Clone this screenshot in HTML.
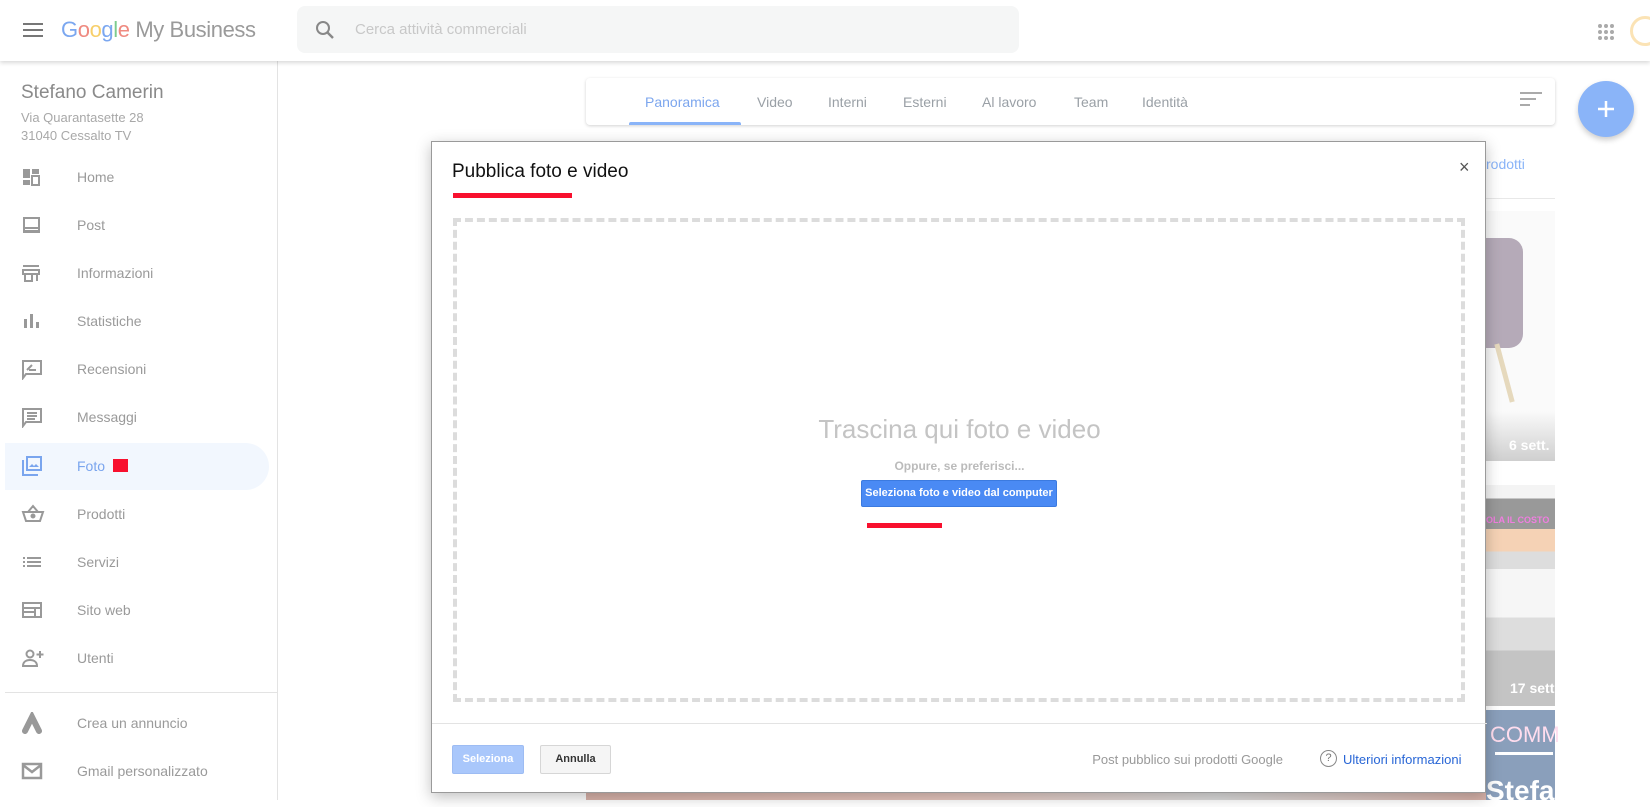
<!DOCTYPE html>
<html><head><meta charset="utf-8">
<style>
*{margin:0;padding:0;box-sizing:border-box}
body{width:1650px;height:800px;overflow:hidden;background:#fff;font-family:"Liberation Sans",Arial,sans-serif;position:relative}
.abs{position:absolute}
.top{left:0;top:0;width:1650px;height:61px;background:#fff;box-shadow:0 2px 4px rgba(0,0,0,.15);z-index:3}
.side{left:0;top:61px;width:278px;height:739px;border-right:1px solid #e3e3e3}
.nav{position:absolute;left:0;width:278px;height:46px;font-size:14px;color:#9a9a9a}
.nav span{position:absolute;left:77px;top:50%;transform:translateY(-50%)}
.nav svg{position:absolute;left:21px;top:50%;transform:translateY(-50%)}
.tab{position:absolute;top:94px;font-size:14px;color:#9aa0a6}
</style></head><body>

<div class="abs top">
  <svg class="abs" style="left:23px;top:22px" width="20" height="16"><rect y="1" width="20" height="2" fill="#777"/><rect y="7" width="20" height="2" fill="#777"/><rect y="13" width="20" height="2" fill="#777"/></svg>
  <div class="abs" style="left:61px;top:17px;font-size:22px;letter-spacing:-0.4px"><span style="color:#7ba7f0">G</span><span style="color:#ef8a80">o</span><span style="color:#f7cf6a">o</span><span style="color:#7ba7f0">g</span><span style="color:#7ccb8e">l</span><span style="color:#ef8a80">e</span> <span style="color:#9a9a9a">My Business</span></div>
  <div class="abs" style="left:297px;top:6px;width:722px;height:47px;background:#f5f6f6;border-radius:8px">
    <svg class="abs" style="left:18px;top:14px" width="20" height="20"><circle cx="8" cy="8" r="6" stroke="#888" stroke-width="2" fill="none"/><line x1="12.5" y1="12.5" x2="18" y2="18" stroke="#888" stroke-width="2.4"/></svg>
    <div class="abs" style="left:58px;top:15px;font-size:15px;color:#c8c8c8">Cerca attività commerciali</div>
  </div>
  <svg class="abs" style="left:1597px;top:23px" width="18" height="18" fill="#aaa"><circle cx="3" cy="3" r="2"/><circle cx="9" cy="3" r="2"/><circle cx="15" cy="3" r="2"/><circle cx="3" cy="9" r="2"/><circle cx="9" cy="9" r="2"/><circle cx="15" cy="9" r="2"/><circle cx="3" cy="15" r="2"/><circle cx="9" cy="15" r="2"/><circle cx="15" cy="15" r="2"/></svg>
  <div class="abs" style="left:1630px;top:16px;width:30px;height:30px;border-radius:50%;border:3px solid #fbe3b5"></div>
</div>

<div class="abs side">
  <div class="abs" style="left:21px;top:21px;font-size:19px;color:#8a8a8a">Stefano Camerin</div>
  <div class="abs" style="left:21px;top:48px;font-size:13px;color:#a8a8a8;line-height:18px">Via Quarantasette 28<br>31040 Cessalto TV</div>
</div>
<div class="abs" style="left:5px;top:443px;width:264px;height:47px;background:#f2f7fe;border-radius:0 24px 24px 0"></div>

<div class="nav" style="top:154px"><svg width="20" height="20" fill="#999"><rect x="2" y="2" width="7" height="9"/><rect x="11" y="2" width="7" height="5"/><rect x="2" y="13" width="7" height="5"/><rect x="11" y="9" width="7" height="9" fill="none" stroke="#999" stroke-width="2"/></svg><span>Home</span></div>
<div class="nav" style="top:202px"><svg width="20" height="20"><rect x="2" y="2" width="17" height="16" fill="#999"/><rect x="4" y="4" width="13" height="8" fill="#fff"/><rect x="4" y="14" width="13" height="1" fill="#fff"/></svg><span>Post</span></div>
<div class="nav" style="top:250px"><svg width="20" height="20" fill="none" stroke="#999" stroke-width="2"><line x1="2" y1="3" x2="18" y2="3"/><path d="M2 7h16v4H2zM4 11v7h7v-7M16 11v7"/></svg><span>Informazioni</span></div>
<div class="nav" style="top:298px"><svg width="20" height="20" fill="#999"><rect x="3" y="8" width="3" height="9"/><rect x="9" y="3" width="3" height="14"/><rect x="15" y="11" width="3" height="6"/></svg><span>Statistiche</span></div>
<div class="nav" style="top:346px"><svg width="22" height="22" fill="none" stroke="#999" stroke-width="2"><path d="M2 3h18v13H5l-3 4z"/><path d="M6 12l5-5M8 12h7"/></svg><span>Recensioni</span></div>
<div class="nav" style="top:394px"><svg width="22" height="22" fill="none" stroke="#999" stroke-width="2"><path d="M2 3h18v13H5l-3 4z"/><path d="M6 7h10M6 10h10M6 13h8"/></svg><span>Messaggi</span></div>
<div class="nav" style="top:443px;color:#7aa5ee"><svg width="22" height="22" fill="none" stroke="#7aa5ee" stroke-width="2"><path d="M2 5v15h15"/><rect x="6" y="2" width="14" height="13"/><path d="M8 12l3-3 2 2 2-2 3 3z" fill="#7aa5ee" stroke="none"/></svg><span>Foto</span><div class="abs" style="left:113px;top:16px;width:15px;height:13px;background:#f8102e"></div></div>
<div class="nav" style="top:491px"><svg width="24" height="22" fill="none" stroke="#999" stroke-width="2"><path d="M2 9h20l-3 9H5zM7 9l5-6 5 6"/><circle cx="12" cy="13" r="1.5" fill="#999"/></svg><span>Prodotti</span></div>
<div class="nav" style="top:539px"><svg width="22" height="20" fill="#999"><rect x="2" y="5" width="2" height="2"/><rect x="6" y="5" width="14" height="2"/><rect x="2" y="9" width="2" height="2"/><rect x="6" y="9" width="14" height="2"/><rect x="2" y="13" width="2" height="2"/><rect x="6" y="13" width="14" height="2"/></svg><span>Servizi</span></div>
<div class="nav" style="top:587px"><svg width="22" height="20" fill="none" stroke="#999" stroke-width="2"><rect x="2" y="3" width="18" height="14"/><path d="M2 8h18M14 8v9M2 12h12"/></svg><span>Sito web</span></div>
<div class="nav" style="top:635px"><svg width="24" height="22" fill="none" stroke="#999" stroke-width="2"><circle cx="9" cy="7" r="3.5"/><path d="M2 19c0-4 3-6 7-6s7 2 7 6z"/><path d="M19 4v7M15.5 7.5h7"/></svg><span>Utenti</span></div>
<div class="abs" style="left:5px;top:692px;width:273px;height:1px;background:#e3e3e3"></div>
<div class="nav" style="top:700px"><svg width="24" height="22"><path d="M4 19L11 5l7 14" stroke="#999" stroke-width="6" stroke-linecap="round" fill="none"/></svg><span>Crea un annuncio</span></div>
<div class="nav" style="top:748px"><svg width="22" height="20" fill="none" stroke="#999" stroke-width="2.5"><rect x="2" y="3" width="18" height="14"/><path d="M2 4l9 7 9-7"/></svg><span>Gmail personalizzato</span></div>

<!-- tab card -->
<div class="abs" style="left:586px;top:78px;width:969px;height:47px;background:#fff;border-radius:4px;box-shadow:0 1px 3px rgba(0,0,0,.18)"></div>
<div class="tab" style="left:645px;color:#7ca6ee">Panoramica</div>
<div class="tab" style="left:757px">Video</div>
<div class="tab" style="left:828px">Interni</div>
<div class="tab" style="left:903px">Esterni</div>
<div class="tab" style="left:982px">Al lavoro</div>
<div class="tab" style="left:1074px">Team</div>
<div class="tab" style="left:1142px">Identità</div>
<div class="abs" style="left:629px;top:122px;width:112px;height:3px;background:#8ab4f8;border-radius:2px 2px 0 0"></div>
<svg class="abs" style="left:1520px;top:92px" width="22" height="14" fill="#aaa"><rect width="22" height="2"/><rect y="6" width="16" height="2"/><rect y="12" width="10" height="2"/></svg>
<div class="abs" style="left:1578px;top:81px;width:56px;height:56px;border-radius:50%;background:#8ab4f8;box-shadow:0 3px 6px rgba(0,0,0,.2)"><svg class="abs" style="left:19px;top:19px" width="18" height="18"><path d="M9 1v16M1 9h16" stroke="#fff" stroke-width="2.5"/></svg></div>

<!-- background right column -->
<div class="abs" style="left:1486px;top:156px;font-size:14px;color:#8ab4f8">rodotti</div>
<div class="abs" style="left:1486px;top:198px;width:69px;height:1px;background:#e8e8e8"></div>
<div class="abs" style="left:1486px;top:211px;width:69px;height:250px;background:linear-gradient(#fafafa 80%,#cfcfcf)"></div>
<div class="abs" style="left:1486px;top:238px;width:37px;height:110px;background:#b5aab8;border-radius:0 14px 14px 0"></div>
<div class="abs" style="left:1502px;top:343px;width:5px;height:60px;background:#e6d9bd;transform:rotate(-15deg)"></div>
<div class="abs" style="left:1509px;top:437px;font-size:14px;color:#fff;font-weight:bold">6 sett.</div>
<div class="abs" style="left:1486px;top:485px;width:69px;height:221px;background:linear-gradient(#f4f4f4 0,#f4f4f4 6%,#999 6%,#999 20%,#f5d2b5 20%,#f5d2b5 30%,#ddd 30%,#ddd 38%,#f6f6f6 38%,#f6f6f6 60%,#ddd 60%,#ddd 75%,#c4c4c4 75%)"></div>
<div class="abs" style="left:1486px;top:515px;font-size:9px;color:#f07ee0;font-weight:bold">OLA IL COSTO</div>
<div class="abs" style="left:1510px;top:680px;font-size:14px;color:#fff;font-weight:bold">17 sett.</div>
<div class="abs" style="left:1486px;top:710px;width:69px;height:90px;background:#8a9fbb"></div>
<div class="abs" style="left:1490px;top:722px;font-size:22px;color:#fde">COMM</div>
<div class="abs" style="left:1495px;top:752px;width:58px;height:3px;background:#fff"></div>
<div class="abs" style="left:1486px;top:775px;font-size:28px;color:#fff;font-weight:bold">Stefa</div>
<div class="abs" style="left:586px;top:793px;width:900px;height:7px;background:linear-gradient(90deg,#d9b3aa,#e8c8c0 40%,#ddd 70%,#d9b3aa)"></div>

<!-- dialog -->
<div class="abs" style="left:431px;top:141px;width:1055px;height:652px;background:#fff;border:1px solid #9a9a9a;box-shadow:0 4px 14px rgba(0,0,0,.25);z-index:5">
  <div class="abs" style="left:20px;top:19px;font-size:19px;color:#111">Pubblica foto e video</div>
  <div class="abs" style="left:21px;top:51px;width:119px;height:5px;background:#f8102e"></div>
  <div class="abs" style="left:1027px;top:15px;font-size:18px;color:#555">×</div>
  <div class="abs" style="left:21px;top:76px;width:1012px;height:484px;border:4px dashed #dcdcdc"></div>
  <div class="abs" style="left:0;top:272px;width:1055px;text-align:center;font-size:26px;color:#c4c4c4">Trascina qui foto e video</div>
  <div class="abs" style="left:0;top:317px;width:1055px;text-align:center;font-size:12px;color:#bbb;font-weight:bold">Oppure, se preferisci...</div>
  <div class="abs" style="left:429px;top:338px;width:196px;height:27px;background:#4a8af4;border:1px solid #3b7ae0;border-radius:2px;color:#fff;font-size:11px;font-weight:bold;text-align:center;line-height:25px">Seleziona foto e video dal computer</div>
  <div class="abs" style="left:435px;top:381px;width:75px;height:5px;background:#f8102e"></div>
  <div class="abs" style="left:0;top:581px;width:1055px;height:1px;background:#e3e3e3"></div>
  <div class="abs" style="left:20px;top:603px;width:72px;height:29px;background:#a9c7fb;border:1px solid #9dbcf3;border-radius:2px;color:#fff;font-size:11px;font-weight:bold;text-align:center;line-height:27px">Seleziona</div>
  <div class="abs" style="left:108px;top:603px;width:71px;height:29px;background:#f5f5f5;border:1px solid #d6d6d6;border-radius:2px;color:#333;font-size:11px;font-weight:bold;text-align:center;line-height:27px">Annulla</div>
  <div class="abs" style="left:600px;top:610px;width:251px;text-align:right;font-size:13px;color:#999">Post pubblico sui prodotti Google</div>
  <div class="abs" style="left:888px;top:608px;width:17px;height:17px;border:1.5px solid #888;border-radius:50%;font-size:11px;color:#777;text-align:center;line-height:14px">?</div>
  <div class="abs" style="left:911px;top:610px;font-size:13px;color:#2866d6">Ulteriori informazioni</div>
</div>
</body></html>
